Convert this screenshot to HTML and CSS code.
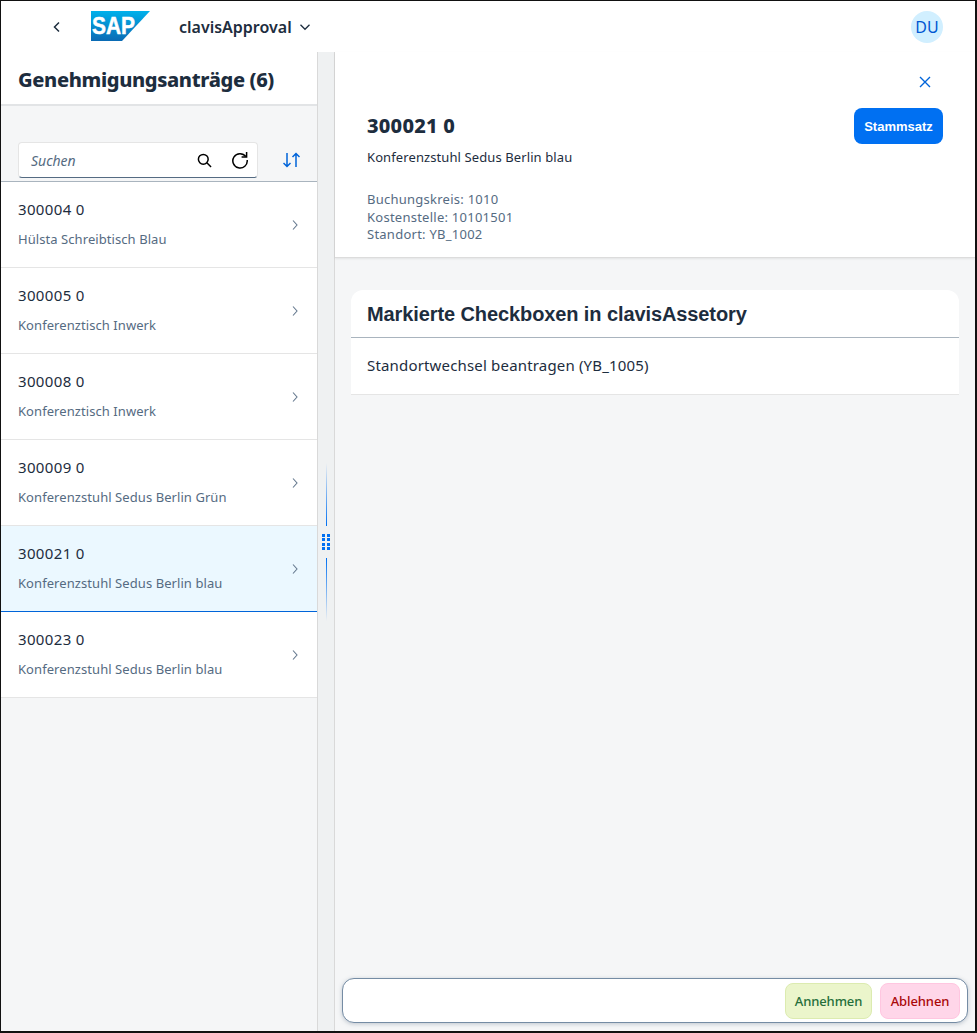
FILE: index.html
```html
<!DOCTYPE html>
<html lang="de">
<head>
    <meta charset="UTF-8">
    <meta name="viewport" content="width=device-width, initial-scale=1.0">
    <title>clavisApproval</title>
    <link rel="stylesheet" href="styles.css">
</head>
<body>

<div class="app">
    <!-- Shell Kopfzeile -->
    <header class="shell">
        <button class="back-btn" aria-label="Zurück">
            <svg width="12" height="12" viewBox="0 0 12 12"><path d="M8 1.5 3.5 6 8 10.5" fill="none" stroke="#1d2d3e" stroke-width="1.5"/></svg>
        </button>
        <svg class="logo" width="59" height="30" viewBox="0 0 59 30">
            <defs>
                <linearGradient id="sapBlue" x1="0" y1="0" x2="0" y2="1">
                    <stop offset="0" stop-color="#00b1eb"/>
                    <stop offset="1" stop-color="#0a6ab4"/>
                </linearGradient>
            </defs>
            <polygon points="0,0 59,0 31,30 0,30" fill="url(#sapBlue)"/>
            <text x="1" y="23" class="logo-text" textLength="43" lengthAdjust="spacingAndGlyphs">SAP</text>
        </svg>
        <div class="app-title">clavisApproval
            <svg width="12" height="12" viewBox="0 0 12 12"><path d="M1.5 3.8 6 8.3l4.500-4.500" fill="none" stroke="#1d2d3e" stroke-width="1.3"/></svg>
        </div>
        <div class="avatar">DU</div>
    </header>

    <div class="main">
        <!-- Liste links -->
        <aside class="master">
            <div class="master-head"><h1>Genehmigungsanträge (6)</h1></div>
            <div class="toolbar">
                <div class="search">
                    <span class="search-text">Suchen</span>
                    <svg width="15" height="15" viewBox="0 0 16 16"><circle cx="6.7" cy="6.7" r="5.2" fill="none" stroke="#000" stroke-width="1.6"/><path d="m10.5 10.5 4.5 4.5" stroke="#000" stroke-width="1.6"/></svg>
                    <svg width="18" height="18" viewBox="0 0 18 18"><path d="M14.8 5.5A7.2 7.2 0 1 0 16.2 9" fill="none" stroke="#000" stroke-width="1.5"/><path d="M15.6 1v5h-5" fill="none" stroke="#000" stroke-width="1.5"/></svg>
                </div>
                <button class="sort-btn" aria-label="Sortieren">
                    <svg width="17" height="16" viewBox="0 0 17 16"><g fill="none" stroke="#0064d9" stroke-width="1.5"><path d="M4 1v13.5M.5 11 4 14.5 7.500 11"/><path d="M13 15V1.500M9.500 5 13 1.500 16.500 5"/></g></svg>
                </button>
            </div>
            <ul class="list">
                <li class="item"><div><div class="item-id">300004 0</div><div class="item-text">Hülsta Schreibtisch Blau</div></div><svg class="chev" width="8" height="12" viewBox="0 0 8 12"><path d="m2 1.500 4 4.500-4 4.500" fill="none" stroke="#64788e" stroke-width="1.100"/></svg></li>
                <li class="item"><div><div class="item-id">300005 0</div><div class="item-text">Konferenztisch Inwerk</div></div><svg class="chev" width="8" height="12" viewBox="0 0 8 12"><path d="m2 1.500 4 4.500-4 4.500" fill="none" stroke="#64788e" stroke-width="1.100"/></svg></li>
                <li class="item"><div><div class="item-id">300008 0</div><div class="item-text">Konferenztisch Inwerk</div></div><svg class="chev" width="8" height="12" viewBox="0 0 8 12"><path d="m2 1.500 4 4.500-4 4.500" fill="none" stroke="#64788e" stroke-width="1.100"/></svg></li>
                <li class="item"><div><div class="item-id">300009 0</div><div class="item-text">Konferenzstuhl Sedus Berlin Grün</div></div><svg class="chev" width="8" height="12" viewBox="0 0 8 12"><path d="m2 1.500 4 4.500-4 4.500" fill="none" stroke="#64788e" stroke-width="1.100"/></svg></li>
                <li class="item selected"><div><div class="item-id">300021 0</div><div class="item-text">Konferenzstuhl Sedus Berlin blau</div></div><svg class="chev" width="8" height="12" viewBox="0 0 8 12"><path d="m2 1.500 4 4.500-4 4.500" fill="none" stroke="#64788e" stroke-width="1.100"/></svg></li>
                <li class="item"><div><div class="item-id">300023 0</div><div class="item-text">Konferenzstuhl Sedus Berlin blau</div></div><svg class="chev" width="8" height="12" viewBox="0 0 8 12"><path d="m2 1.500 4 4.500-4 4.500" fill="none" stroke="#64788e" stroke-width="1.100"/></svg></li>
            </ul>
        </aside>

        <!-- Trenner -->
        <div class="splitter">
            <span class="split-line up"></span>
            <span class="grip"><i></i><i></i><i></i><i></i><i></i><i></i><i></i><i></i></span>
            <span class="split-line down"></span>
        </div>

        <!-- Details rechts -->
        <section class="detail">
            <div class="detail-head">
                <div class="close-row">
                    <svg width="12" height="12" viewBox="0 0 12 12"><path d="m1 1 10 10M11 1 1 11" stroke="#0064d9" stroke-width="1.400"/></svg>
                </div>
                <div class="title-row">
                    <h2>300021 0</h2>
                    <button class="btn-primary">Stammsatz</button>
                </div>
                <p class="subtitle">Konferenzstuhl Sedus Berlin blau</p>
                <div class="attrs">
                    <div>Buchungskreis: 1010</div>
                    <div>Kostenstelle: 10101501</div>
                    <div>Standort: YB_1002</div>
                </div>
            </div>
            <div class="detail-body">
                <div class="card">
                    <h3>Markierte Checkboxen in clavisAssetory</h3>
                    <div class="card-row">Standortwechsel beantragen (YB_1005)</div>
                </div>
            </div>
            <div class="footer-wrap">
                <div class="footer">
                    <button class="btn-accept">Annehmen</button>
                    <button class="btn-reject">Ablehnen</button>
                </div>
            </div>
        </section>
    </div>
</div>

</body>
</html>
```

FILE: styles.css
```css
* {
    box-sizing: border-box;
}
html, body {
    margin: 0;
    padding: 0;
}
body {
    font-family: "Noto Sans", Arial, sans-serif;
    color: #1d2d3e;
    background-color: #fff;
}
button {
    font-family: inherit;
    border: none;
    background: none;
    padding: 0;
}
.app {
    width: 977px;
    height: 1033px;
    display: flex;
    flex-direction: column;
    border: 1px solid #111;
    border-width: 1px 2px 2px 1px;
    overflow: hidden;
}

/* Kopfzeile */
.shell {
    height: 51px;
    flex: none;
    display: flex;
    align-items: center;
    padding-left: 50px;
    padding-right: 32px;
    background-color: #fff;
}
.back-btn {
    width: 12px;
    height: 12px;
    display: flex;
    margin-right: 28px;
}
.logo {
    margin-right: 29px;
    margin-top: -1px;
}
.logo-text {
    font-family: "Liberation Sans", Arial, sans-serif;
    font-weight: 700;
    font-size: 23px;
    fill: #fff;
    stroke: #fff;
    stroke-width: 0.5px;
}
.app-title {
    font-size: 16px;
    font-weight: 600;
    display: flex;
    align-items: center;
    gap: 7px;
}
.avatar {
    margin-left: auto;
    width: 32px;
    height: 32px;
    border-radius: 50%;
    background-color: #d1efff;
    color: #0057d2;
    font-size: 16px;
    display: flex;
    align-items: center;
    justify-content: center;
}

.main {
    flex: 1;
    display: flex;
    min-height: 0;
}

/* Liste */
.master {
    width: 316px;
    flex: none;
    background-color: #f5f6f7;
}
.master-head {
    height: 54px;
    background-color: #fff;
    border-bottom: 2px solid #e2e4e6;
    padding: 3px 0 0 17px;
    display: flex;
    align-items: center;
}
.master-head h1 {
    margin: 0;
    font-size: 20px;
    font-weight: 800;
    letter-spacing: -0.35px;
}
.toolbar {
    height: 76px;
    padding: 36px 17px 3px 17px;
    display: flex;
    align-items: center;
    justify-content: space-between;
    border-bottom: 1px solid #a9b4be;
}
.search {
    width: 240px;
    height: 36px;
    background-color: #fff;
    border-radius: 4px;
    border: 1px solid #e5e5e5;
    border-bottom: 1px solid #556b82;
    display: flex;
    align-items: center;
    padding: 0 8px 0 12px;
    gap: 19px;
}
.search-text {
    flex: 1;
    font-size: 14px;
    font-style: italic;
    color: #556b81;
}
.sort-btn {
    display: flex;
}
.list {
    list-style: none;
    margin: 0;
    padding: 0;
}
.item {
    height: 86px;
    background-color: #fff;
    border-bottom: 1px solid #e5e5e5;
    padding: 0 18px 2px 17px;
    display: flex;
    align-items: center;
    justify-content: space-between;
}
.item.selected {
    background-color: #ebf8ff;
    border-bottom: 1px solid #0064d9;
}
.chev {
    margin-top: 2px;
}
.item-id {
    font-size: 15px;
    line-height: 20px;
    letter-spacing: 0.35px;
    margin-bottom: 11px;
}
.item-text {
    font-size: 13px;
    line-height: 18px;
    letter-spacing: 0.07px;
    color: #556b82;
}

/* Trenner */
.splitter {
    width: 18px;
    flex: none;
    background-color: #eff1f2;
    border-left: 1px solid #d9d9d9;
    border-right: 1px solid #d9d9d9;
    display: flex;
    flex-direction: column;
    align-items: center;
    justify-content: center;
}
.split-line {
    width: 1px;
    height: 63px;
}
.split-line.up {
    background: linear-gradient(to bottom, rgba(0, 112, 242, 0), #0070f2);
}
.split-line.down {
    background: linear-gradient(to top, rgba(0, 112, 242, 0), #0070f2);
}
.grip {
    width: 8px;
    height: 16px;
    margin: 8px 0;
    display: grid;
    grid-template-columns: 3px 3px;
    grid-auto-rows: 3px;
    row-gap: 1.5px;
    justify-content: space-between;
}
.grip i {
    background-color: #0070f2;
}

/* Details */
.detail {
    flex: 1;
    min-width: 0;
    background-color: #f5f6f7;
    display: flex;
    flex-direction: column;
}
.detail-head {
    background-color: #fff;
    padding: 0 32px;
    height: 206px;
    border-bottom: 1px solid #dcdcdc;
    box-shadow: 0 1px 2px rgba(0, 0, 0, 0.08);
}
.close-row {
    height: 56px;
    padding-right: 12px;
    padding-top: 24px;
    display: flex;
    justify-content: flex-end;
}
.title-row {
    display: flex;
    justify-content: space-between;
    align-items: center;
    height: 36px;
}
.title-row h2 {
    margin: -2px 0 0;
    font-size: 20px;
    font-weight: 800;
    letter-spacing: 0.25px;
}
.btn-primary {
    height: 36px;
    width: 89px;
    border-radius: 8px;
    background-color: #0070f2;
    color: #fff;
    font-family: "Liberation Sans", Arial, sans-serif;
    font-size: 13px;
    font-weight: 700;
}
.subtitle {
    margin: 4px 0 0;
    font-size: 13px;
    line-height: 18px;
    letter-spacing: 0.1px;
}
.attrs {
    margin-top: 25px;
    font-size: 13px;
    line-height: 17.5px;
    letter-spacing: 0.25px;
    color: #556b82;
}
.detail-body {
    flex: 1;
    padding: 32px 16px 0;
}
.card {
    background-color: #fff;
    border-radius: 12px 12px 0 0;
    border-bottom: 1px solid #e5e5e5;
}
.card h3 {
    margin: 0;
    height: 48px;
    padding: 1px 16px 0;
    display: flex;
    align-items: center;
    font-family: "Liberation Sans", Arial, sans-serif;
    font-size: 20px;
    font-weight: 700;
    letter-spacing: -0.1px;
    border-bottom: 1px solid #a9b4be;
}
.card-row {
    height: 56px;
    padding: 0 16px 2px;
    display: flex;
    align-items: center;
    font-size: 15px;
    letter-spacing: 0.17px;
}
.footer-wrap {
    padding: 0 7px 8px;
}
.footer {
    height: 45px;
    background-color: #fff;
    border: 1px solid #758ca4;
    border-radius: 12px;
    box-shadow: 0 1px 4px rgba(85, 107, 130, 0.35);
    display: flex;
    justify-content: flex-end;
    align-items: center;
    gap: 8px;
    padding: 1px 7px 0 0;
}
.footer button {
    height: 36px;
    border-radius: 8px;
    font-size: 13px;
    font-weight: 500;
    letter-spacing: -0.1px;
}
.btn-accept {
    width: 87px;
    background-color: #ebf5cb;
    border: 1px solid #dcebb0;
    color: #256f3a;
}
.btn-reject {
    width: 80px;
    background-color: #ffd6e9;
    border: 1px solid #ffc6e0;
    color: #aa0808;
}
```
